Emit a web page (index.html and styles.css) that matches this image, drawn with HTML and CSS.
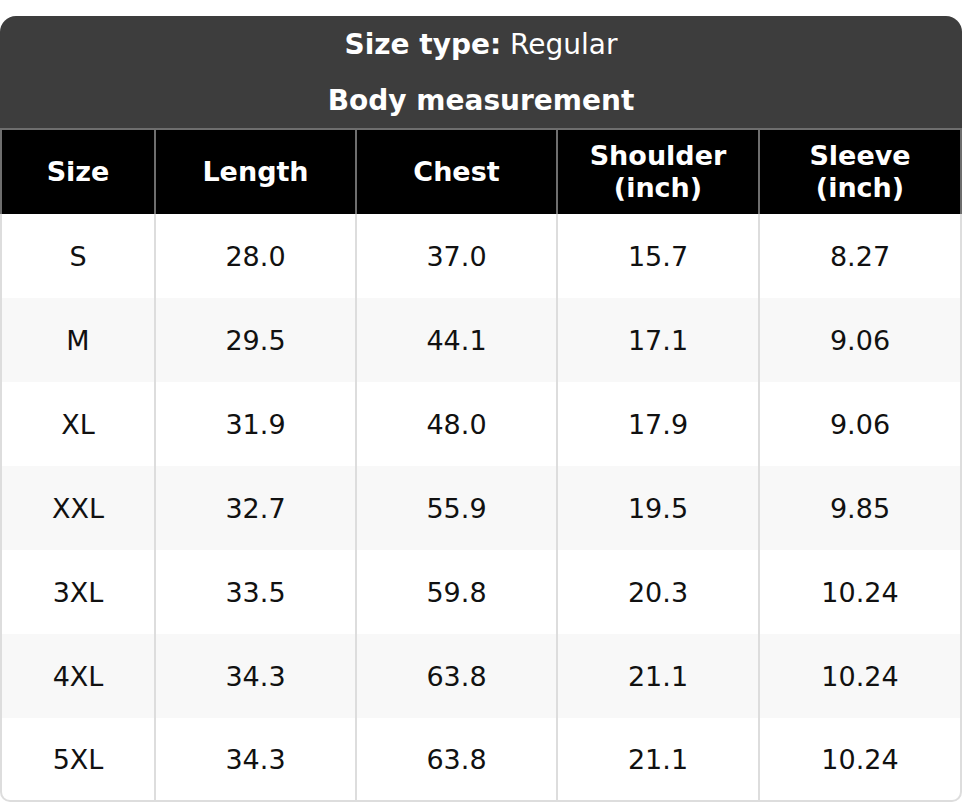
FILE: index.html
```html
<!DOCTYPE html>
<html lang="en">
<head>
<meta charset="utf-8">
<title>Size chart</title>
<link rel="stylesheet" href="styles.css">
</head>
<body>
<div class="chart">
  <div class="titles">
    <div class="title-row"><b>Size type:</b>&nbsp;Regular</div>
    <div class="title-row bold">Body measurement</div>
  </div>
  <table class="sizes">
    <colgroup>
      <col class="c1"><col class="c2"><col class="c3"><col class="c4"><col class="c5">
    </colgroup>
    <thead>
      <tr><th>Size</th><th>Length</th><th>Chest</th><th>Shoulder<br>(inch)</th><th>Sleeve<br>(inch)</th></tr>
    </thead>
    <tbody>
      <tr><td>S</td><td>28.0</td><td>37.0</td><td>15.7</td><td>8.27</td></tr>
      <tr><td>M</td><td>29.5</td><td>44.1</td><td>17.1</td><td>9.06</td></tr>
      <tr><td>XL</td><td>31.9</td><td>48.0</td><td>17.9</td><td>9.06</td></tr>
      <tr><td>XXL</td><td>32.7</td><td>55.9</td><td>19.5</td><td>9.85</td></tr>
      <tr><td>3XL</td><td>33.5</td><td>59.8</td><td>20.3</td><td>10.24</td></tr>
      <tr><td>4XL</td><td>34.3</td><td>63.8</td><td>21.1</td><td>10.24</td></tr>
      <tr><td>5XL</td><td>34.3</td><td>63.8</td><td>21.1</td><td>10.24</td></tr>
    </tbody>
  </table>
</div>
</body>
</html>
```
FILE: styles.css
```css
html, body {
  margin: 0;
  padding: 0;
  background: #ffffff;
}
body {
  padding-top: 16px;
  font-family: "DejaVu Sans", Verdana, sans-serif;
}
.chart {
  width: 962px;
}
.titles {
  background: #3d3d3d;
  border-radius: 16px 16px 0 0;
}
.title-row {
  height: 56px;
  color: #ffffff;
  font-size: 28px;
  display: flex;
  align-items: center;
  justify-content: center;
}
.title-row.bold {
  font-weight: bold;
}
.sizes {
  width: 962px;
  border-collapse: separate;
  border-spacing: 0;
  table-layout: fixed;
}
.c1 { width: 156px; }
.c2 { width: 201px; }
.c3 { width: 201px; }
.c4 { width: 202px; }
.c5 { width: 202px; }
.sizes th {
  height: 86px;
  box-sizing: border-box;
  background: #000000;
  color: #ffffff;
  font-size: 27px;
  font-weight: bold;
  line-height: 32px;
  padding: 0;
  border-top: 2px solid #6e6e6e;
  border-right: 2px solid #6e6e6e;
  text-align: center;
}
.sizes th:first-child {
  border-left: 2px solid #6e6e6e;
}
.sizes td {
  height: 84px;
  box-sizing: border-box;
  padding: 0;
  font-size: 27px;
  color: #111111;
  text-align: center;
  border-right: 2px solid #dddddd;
}
.sizes td:first-child {
  border-left: 2px solid #dddddd;
}
.sizes tbody tr:nth-child(even) td {
  background: #f8f8f8;
}
.sizes tbody tr:last-child td {
  border-bottom: 2px solid #dddddd;
}
.sizes tbody tr:last-child td:first-child {
  border-bottom-left-radius: 10px;
}
.sizes tbody tr:last-child td:last-child {
  border-bottom-right-radius: 10px;
}
```
